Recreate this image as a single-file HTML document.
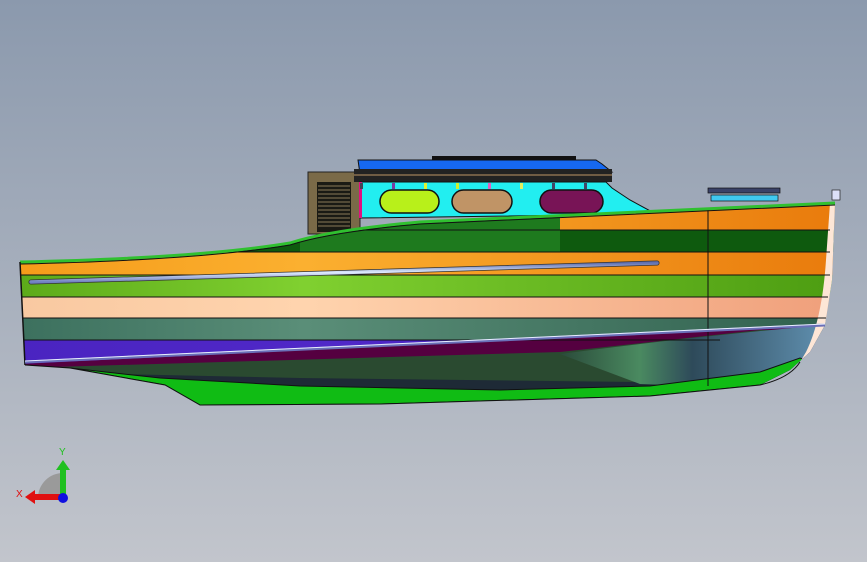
<!DOCTYPE html>
<html><head><meta charset="utf-8"><style>
html,body{margin:0;padding:0;width:867px;height:562px;overflow:hidden}
svg{display:block}
</style></head><body>
<svg width="867" height="562" viewBox="0 0 867 562" xmlns="http://www.w3.org/2000/svg">
<defs>
<linearGradient id="bg" x1="0" y1="0" x2="0" y2="1">
<stop offset="0" stop-color="#8b99ad"/><stop offset="1" stop-color="#c2c5cc"/>
</linearGradient>
<linearGradient id="or" x1="0" y1="0" x2="1" y2="0">
<stop offset="0" stop-color="#f59a18"/><stop offset="0.35" stop-color="#fbb030"/><stop offset="1" stop-color="#e8780a"/>
</linearGradient>
<linearGradient id="yg" x1="0" y1="0" x2="1" y2="0">
<stop offset="0" stop-color="#5aa818"/><stop offset="0.35" stop-color="#80d030"/><stop offset="1" stop-color="#4a9a10"/>
</linearGradient>
<linearGradient id="pe" x1="0" y1="0" x2="1" y2="0">
<stop offset="0" stop-color="#f8c8a0"/><stop offset="0.35" stop-color="#ffd4ae"/><stop offset="1" stop-color="#ef9c78"/>
</linearGradient>
<linearGradient id="te" x1="0" y1="0" x2="1" y2="0">
<stop offset="0" stop-color="#3a6e5c"/><stop offset="0.35" stop-color="#5a8e78"/><stop offset="1" stop-color="#2e5e4c"/>
</linearGradient>
<linearGradient id="pu" x1="0" y1="0" x2="1" y2="0">
<stop offset="0" stop-color="#4a24c0"/><stop offset="0.4" stop-color="#5028c8"/><stop offset="1" stop-color="#2a0aa0"/>
</linearGradient>
<linearGradient id="bw" x1="0" y1="0" x2="1" y2="0">
<stop offset="0" stop-color="#2a4a3a"/><stop offset="0.3" stop-color="#4a8a60"/><stop offset="0.5" stop-color="#2e4a5a"/><stop offset="1" stop-color="#6090b0"/>
</linearGradient>
<linearGradient id="rail" x1="0" y1="0" x2="0" y2="1">
<stop offset="0" stop-color="#6070b0"/><stop offset="0.5" stop-color="#e0ecff"/><stop offset="1" stop-color="#7080c0"/>
</linearGradient>
<clipPath id="hull">
<path d="M20,262 Q200,258 290,243 Q330,230 420,222 L835,203 L832,280 L825,325 L810,352 L790,370 L760,385 L650,396 L380,404 L200,405 L165,385 L70,368 L25,365 Z"/>
</clipPath>
</defs>
<rect width="867" height="562" fill="url(#bg)"/>

<rect x="308" y="172" width="52" height="62" fill="#7a6a48" stroke="#222" stroke-width="1"/>
<rect x="317" y="182" width="34" height="50" fill="#1a1a14"/>
<g stroke="#8a7a58" stroke-width="1">
<line x1="318" y1="186" x2="350" y2="186"/><line x1="318" y1="190" x2="350" y2="190"/><line x1="318" y1="194" x2="350" y2="194"/><line x1="318" y1="198" x2="350" y2="198"/><line x1="318" y1="202" x2="350" y2="202"/><line x1="318" y1="206" x2="350" y2="206"/><line x1="318" y1="210" x2="350" y2="210"/><line x1="318" y1="214" x2="350" y2="214"/><line x1="318" y1="218" x2="350" y2="218"/><line x1="318" y1="222" x2="350" y2="222"/><line x1="318" y1="226" x2="350" y2="226"/>
</g>

<rect x="432" y="156" width="144" height="5" fill="#111"/>
<path d="M358,160 L596,160 L602,164 L612,172 L360,174 Z" fill="#1668f0" stroke="#111" stroke-width="1"/>
<rect x="354" y="169" width="258" height="13" fill="#222"/>
<line x1="354" y1="175" x2="612" y2="175" stroke="#8a7050" stroke-width="1.5"/>
<path d="M360,182 L606,182 L612,188 L630,200 L656,214 L360,218 Z" fill="#22eef0" stroke="#111" stroke-width="1"/>
<rect x="359" y="182" width="3" height="36" fill="#e01080"/>
<g>
<rect x="360" y="183" width="3" height="6" fill="#445"/>
<rect x="392" y="183" width="3" height="6" fill="#7a3aa0"/>
<rect x="424" y="183" width="3" height="6" fill="#e0f030"/>
<rect x="456" y="183" width="3" height="6" fill="#d0f030"/>
<rect x="488" y="183" width="3" height="6" fill="#e060c0"/>
<rect x="520" y="183" width="3" height="6" fill="#e0f060"/>
<rect x="552" y="183" width="3" height="6" fill="#446"/>
<rect x="584" y="183" width="3" height="6" fill="#446"/>
</g>
<rect x="380" y="190" width="59" height="23" rx="11.5" fill="#b8f01a" stroke="#111" stroke-width="1.5"/>
<rect x="452" y="190" width="60" height="23" rx="11.5" fill="#c09466" stroke="#111" stroke-width="1.5"/>
<rect x="540" y="190" width="63" height="23" rx="11.5" fill="#781456" stroke="#111" stroke-width="1.5"/>

<rect x="708" y="188" width="72" height="5" fill="#3a4268" stroke="#111" stroke-width="0.7"/>
<rect x="711" y="195" width="67" height="6" fill="#40c8f0" stroke="#111" stroke-width="0.7"/>
<rect x="832" y="190" width="8" height="10" fill="#dde0f8" stroke="#222" stroke-width="0.7"/>

<g clip-path="url(#hull)">
<rect x="0" y="150" width="867" height="80" fill="url(#or)"/>
<rect x="0" y="230" width="867" height="22" fill="#0e5a0e"/>
<polygon points="300,220 560,215 560,252 300,252" fill="#1e7a1e"/>
<rect x="0" y="252" width="867" height="23" fill="url(#or)"/>
<rect x="0" y="275" width="867" height="22" fill="url(#yg)"/>
<rect x="0" y="297" width="867" height="21" fill="url(#pe)"/>
<rect x="0" y="318" width="867" height="22" fill="url(#te)"/>
<rect x="0" y="340" width="867" height="30" fill="url(#pu)"/>
<polygon points="20,364 825,325 867,400 0,420" fill="#550040"/>
<polygon points="20,368 560,352 760,330 867,330 867,420 0,420" fill="#2a4a30"/>
<polygon points="20,372 300,378 640,382 867,360 867,420 0,420" fill="#1e2a36"/>
<path d="M560,354 Q680,338 825,325 L815,350 L790,372 L700,386 L640,384 Z" fill="url(#bw)"/>
<path d="M25,365 L70,368 L160,378 L300,386 L500,390 L650,386 L760,372 L800,358 L812,362 L790,375 L760,385 L650,396 L380,404 L200,405 L165,385 L70,368 Z" fill="#10bc14" stroke="#111" stroke-width="1"/>
<path d="M830,203 L842,203 Q840,300 826,338 Q812,358 800,362 L806,352 Q822,320 826,260 Z" fill="#fde6d6"/>
</g>
<g stroke="#111" stroke-width="1" clip-path="url(#hull)">
<line x1="0" y1="230" x2="830" y2="230"/><line x1="0" y1="252" x2="830" y2="252"/><line x1="0" y1="275" x2="830" y2="275"/><line x1="0" y1="297" x2="828" y2="297"/><line x1="0" y1="318" x2="826" y2="318"/><line x1="0" y1="340" x2="720" y2="340"/>
<line x1="708" y1="200" x2="708" y2="386"/>
</g>
<path d="M20,262 Q200,258 290,243 Q330,230 420,222 L835,203" fill="none" stroke="#30c030" stroke-width="3"/>
<path d="M20,264 Q200,260 290,245 Q330,232 420,224 L835,205" fill="none" stroke="#111" stroke-width="1"/>
<path d="M20,262 L25,365" stroke="#111" stroke-width="1.5"/>
<path d="M800,362 Q790,378 760,385 L650,396 L380,404 L200,405 L165,385 L70,368 L25,365" fill="none" stroke="#111" stroke-width="1"/>
<line x1="31" y1="282" x2="657" y2="263" stroke="#333" stroke-width="5" stroke-linecap="round"/>
<line x1="31" y1="282" x2="657" y2="263" stroke="url(#rail)" stroke-width="3.5" stroke-linecap="round"/>
<line x1="25" y1="362" x2="825" y2="325" stroke="#6a70b8" stroke-width="3"/>
<line x1="25" y1="361" x2="825" y2="324" stroke="#e8eeff" stroke-width="1"/>

<path d="M63,498 L38,498 A25,25 0 0 1 63,473 Z" fill="#9a9a9a"/>
<rect x="60" y="467" width="6" height="31" fill="#20c020"/>
<polygon points="56,470 63,460 70,470" fill="#20c020"/>
<rect x="32" y="494" width="31" height="6" fill="#e01010"/>
<polygon points="35,490 25,497 35,504" fill="#e01010"/>
<circle cx="63" cy="498" r="5" fill="#1010e0"/>
<text x="59" y="455" font-family="Liberation Sans, sans-serif" font-size="10" fill="#20c020">Y</text>
<text x="16" y="497" font-family="Liberation Sans, sans-serif" font-size="10" fill="#e01010">X</text>
</svg>
</body></html>
